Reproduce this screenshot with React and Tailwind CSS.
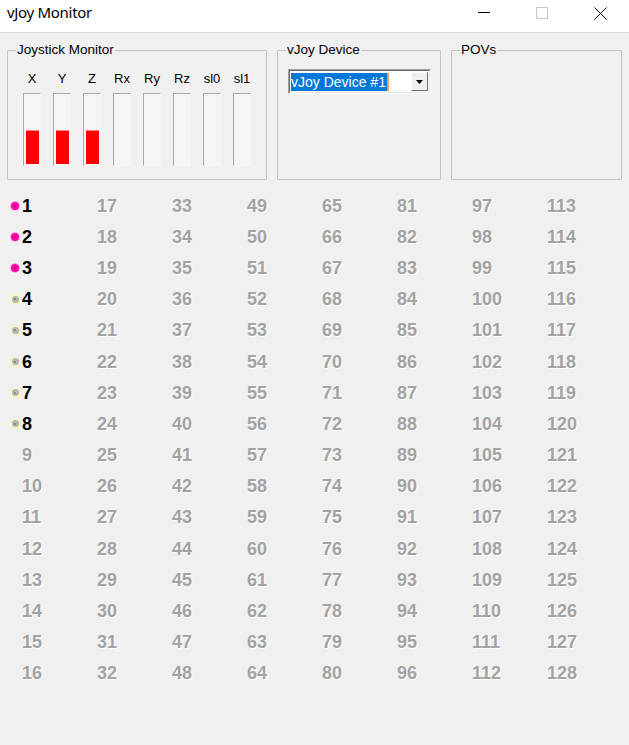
import React from 'react';

const AXES = [
  { name: 'X', value: 34 },
  { name: 'Y', value: 34 },
  { name: 'Z', value: 34 },
  { name: 'Rx', value: 0 },
  { name: 'Ry', value: 0 },
  { name: 'Rz', value: 0 },
  { name: 'sl0', value: 0 },
  { name: 'sl1', value: 0 },
];

const ui = { fontFamily: '"Liberation Sans", Arial, sans-serif' };

function Dot({ on }) {
  if (on) {
    return (
      <span className="w-[10px] h-[10px] rounded-full bg-[#ffb3e0] flex items-center justify-center">
        <span className="w-[8px] h-[8px] rounded-full bg-[#ff00a8] flex items-center justify-center">
          <span className="w-[2px] h-[2px] bg-[#b00070]" />
        </span>
      </span>
    );
  }
  return (
    <span className="w-[10px] h-[10px] bg-[#f7f3c9] flex items-center justify-center">
      <span className="w-[7px] h-[7px] rounded-full bg-[#b4b4b4] flex items-center justify-center">
        <span className="w-[2px] h-[2px] bg-[#8a8a8a]" />
      </span>
    </span>
  );
}

function ButtonCell({ n }) {
  const active = n <= 8;
  return (
    <div className="flex items-center">
      <div className="w-[12px] flex items-center">{active && <Dot on={n <= 3} />}</div>
      <span
        className={
          'text-[18px] font-bold leading-none ' +
          (active ? 'text-black' : 'text-[#a3a3a3] [text-shadow:1px_1px_0_#ffffff]')
        }
        style={ui}
      >
        {n}
      </span>
    </div>
  );
}

function Group({ title, className, children }) {
  return (
    <fieldset className={'border border-[#c4c4c4] rounded-[1px] h-[138px] ' + className}>
      <legend className="ml-[8px] px-[1px] text-[13.5px] leading-[16px] text-black" style={ui}>
        {title}
      </legend>
      {children}
    </fieldset>
  );
}

export default function App() {
  const buttons = Array.from({ length: 128 }, (_, i) => i + 1);

  return (
    <div className="w-[629px] h-[745px] bg-[#f0f0f0] flex flex-col overflow-hidden">
      {/* Title bar */}
      <div className="h-[33px] bg-white border-b border-[#d9d9d9] flex items-start shrink-0">
        <span
          className="pl-[7px] pt-[3px] text-[15px] leading-[18px] text-black tracking-[-0.3px]"
          style={{ fontFamily: '"Noto Sans", "Open Sans", sans-serif' }}
        >
          vJoy Monitor
        </span>
        <div className="ml-auto flex">
          <div className="w-[58px] h-[32px] flex items-center justify-center">
            <span className="w-[12px] h-[1px] bg-black mt-[-8px]" />
          </div>
          <div className="w-[58px] h-[32px] flex items-center justify-center">
            <span className="w-[12px] h-[12px] border border-[#c8c8c8] mt-[-6px]" />
          </div>
          <div className="w-[58px] h-[32px] flex items-center justify-center">
            <svg width="13" height="13" viewBox="0 0 13 13" className="mt-[-6px]">
              <path d="M0.5 0.5 L12.5 12.5 M12.5 0.5 L0.5 12.5" stroke="#000" strokeWidth="1" />
            </svg>
          </div>
        </div>
      </div>

      {/* Group boxes */}
      <div className="flex pt-[9px] pl-[7px] gap-[10px]">
        <Group title="Joystick Monitor" className="w-[260px]">
          <div className="flex gap-[12px] pl-[15px] mt-[13px]">
            {AXES.map((a) => (
              <div key={a.name} className="w-[18px] flex flex-col items-center">
                <span className="text-[13px] leading-[16px] text-black whitespace-nowrap" style={ui}>
                  {a.name}
                </span>
                <div className="mt-[6px] w-[18px] h-[73px] border-t border-l border-[#a9a9a9] border-b border-r border-b-[#f7f7f7] border-r-[#f7f7f7] bg-[#f5f5f5] flex flex-col justify-end pl-[2px] pr-[1px] pb-[1px]">
                  {a.value > 0 && (
                    <div className="w-full bg-[#ff0000] border-t border-[#ff8080]" style={{ height: a.value }} />
                  )}
                </div>
              </div>
            ))}
          </div>
        </Group>

        <Group title="vJoy Device" className="w-[164px]">
          <div className="pl-[10px] mt-[11px]">
            <div className="w-[143px] h-[25px] border border-[#a0a0a0] border-b-white border-r-white">
              <div className="h-full border border-[#696969] border-b-[#e3e3e3] border-r-[#e3e3e3] bg-white flex items-center pl-[1px] pr-[1px]">
                <span
                  className="bg-[#0078d7] text-white text-[14px] leading-[18px] pr-[1px] whitespace-nowrap"
                  style={ui}
                >
                  vJoy Device #1
                </span>
                <span className="w-[2px] h-[18px] bg-[#f7a24a]" />
                <div className="ml-auto w-[17px] h-[19px] bg-[#f0f0f0] border border-t-white border-l-white border-b-[#696969] border-r-[#696969] flex items-center justify-center">
                  <svg width="7" height="4" viewBox="0 0 7 4">
                    <path d="M0 0 H7 L3.5 4 Z" fill="#000" />
                  </svg>
                </div>
              </div>
            </div>
          </div>
        </Group>

        <Group title="POVs" className="w-[171px]" />
      </div>

      {/* Buttons */}
      <div className="mt-[10px] pl-[10px] grid grid-flow-col grid-rows-[repeat(16,31.2px)] grid-cols-[repeat(8,75px)]">
        {buttons.map((n) => (
          <ButtonCell key={n} n={n} />
        ))}
      </div>
    </div>
  );
}
